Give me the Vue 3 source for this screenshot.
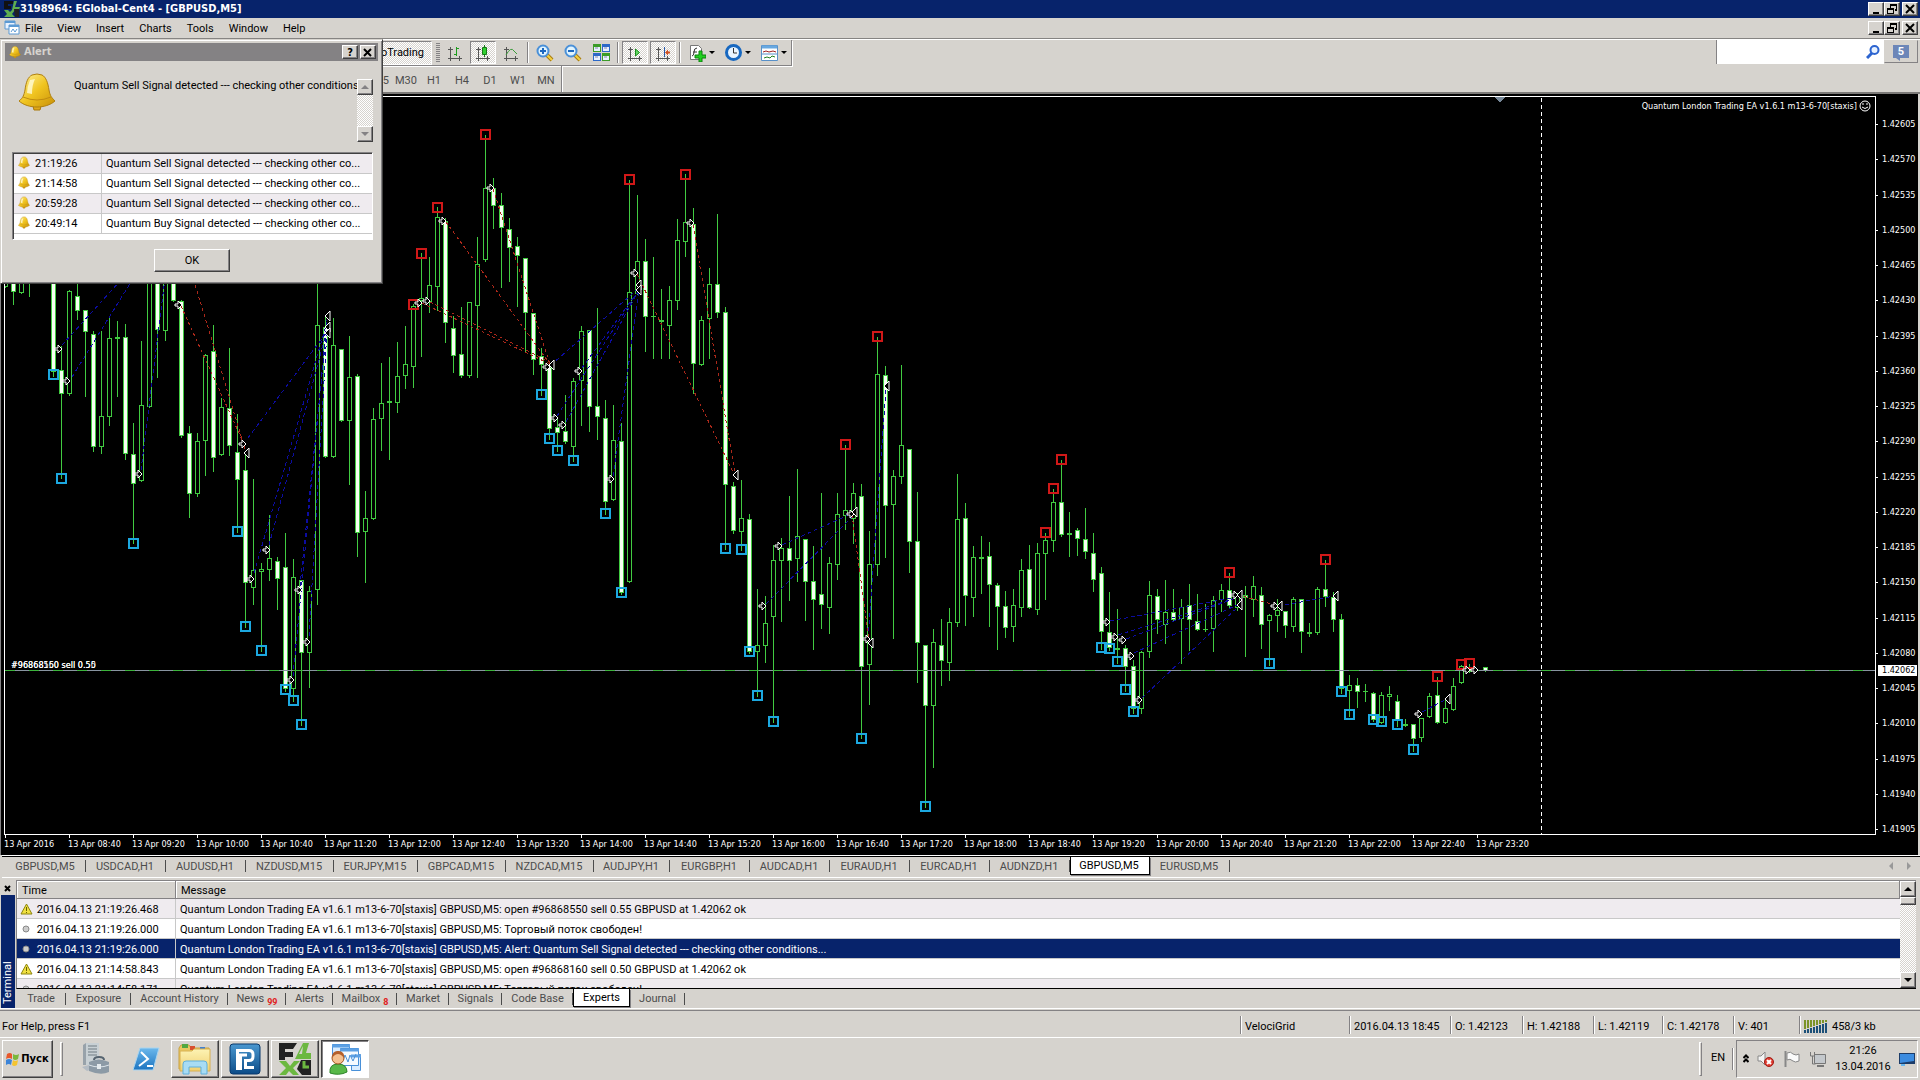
<script setup>
const menus = ['File', 'View', 'Insert', 'Charts', 'Tools', 'Window', 'Help']
const periods = ['M15', 'M30', 'H1', 'H4', 'D1', 'W1', 'MN']

const alerts = [
  { time: '21:19:26', text: 'Quantum Sell Signal detected --- checking other co...' },
  { time: '21:14:58', text: 'Quantum Sell Signal detected --- checking other co...' },
  { time: '20:59:28', text: 'Quantum Sell Signal detected --- checking other co...' },
  { time: '20:49:14', text: 'Quantum Buy Signal detected --- checking other co...' },
]

// Each bar: kind (f = falling, h = rising, d = flat), high, body top, body bottom, low
const bars = [
  ['h', 262, 262, 287, 287], ['f', 250, 250, 292, 304], ['h', 250, 250, 293, 293], ['d', 250, 260, 261, 296], null, null,
  ['f', 240, 240, 372, 376], ['f', 346, 370, 394, 478], ['h', 290, 291, 394, 395], ['f', 283, 296, 311, 319],
  ['f', 310, 310, 332, 396], ['f', 331, 334, 447, 451], ['h', 331, 416, 447, 453], ['h', 318, 338, 417, 425],
  ['d', 321, 337, 339, 396], ['f', 324, 337, 454, 459], ['f', 423, 454, 484, 543], ['h', 341, 405, 481, 481],
  ['h', 250, 250, 407, 407], ['f', 250, 250, 330, 377], ['h', 250, 250, 331, 340], ['f', 250, 250, 301, 301],
  ['f', 300, 301, 436, 437], ['f', 426, 433, 494, 517], ['h', 433, 441, 494, 496], ['h', 354, 355, 441, 475],
  ['f', 325, 351, 458, 471], ['h', 398, 407, 455, 455], ['f', 348, 408, 446, 455], ['f', 414, 452, 480, 532],
  ['f', 455, 470, 583, 627], ['h', 479, 570, 588, 604], ['h', 563, 569, 572, 651], ['h', 515, 558, 570, 580],
  ['f', 557, 561, 579, 609], ['f', 533, 567, 689, 691], ['h', 559, 577, 689, 701], ['f', 580, 580, 653, 725],
  ['h', 586, 591, 653, 687], ['h', 250, 325, 590, 604], ['f', 315, 327, 457, 457], ['h', 318, 345, 457, 457],
  ['f', 349, 349, 421, 421], ['h', 336, 377, 421, 484], ['f', 374, 376, 533, 556], ['h', 491, 518, 532, 582],
  ['h', 408, 419, 519, 519], ['h', 363, 403, 419, 450], ['d', 357, 401, 403, 459], ['h', 342, 376, 403, 412],
  ['h', 326, 364, 376, 388], ['h', 304, 306, 367, 387], ['h', 253, 298, 301, 356], ['h', 257, 285, 302, 312],
  ['h', 207, 217, 287, 310], ['f', 218, 221, 323, 342], ['f', 316, 328, 356, 372], ['f', 307, 354, 376, 377],
  ['h', 302, 302, 376, 377], ['h', 237, 264, 306, 377], ['h', 135, 188, 260, 261], ['f', 178, 188, 206, 228],
  ['f', 193, 205, 228, 287], ['f', 218, 229, 248, 281], ['f', 237, 246, 256, 306], ['f', 258, 258, 313, 351],
  ['f', 313, 313, 360, 374], ['f', 348, 356, 365, 395], ['f', 362, 367, 429, 439], ['f', 419, 427, 433, 451],
  ['f', 395, 431, 442, 443], ['h', 378, 381, 447, 461], ['h', 326, 331, 381, 425], ['f', 330, 330, 407, 431],
  ['f', 308, 406, 417, 439], ['f', 400, 418, 502, 514], ['h', 405, 440, 500, 500], ['f', 423, 441, 593, 594],
  ['h', 180, 292, 582, 582], ['h', 195, 261, 294, 294], ['f', 239, 261, 317, 351], ['d', 257, 316, 317, 358],
  ['d', 289, 320, 322, 358], ['h', 286, 300, 326, 358], ['h', 219, 240, 301, 309], ['h', 174, 222, 242, 256],
  ['f', 208, 224, 364, 393], ['h', 316, 320, 365, 365], ['h', 268, 284, 319, 358], ['f', 214, 284, 313, 317],
  ['f', 307, 312, 485, 549], ['f', 482, 486, 531, 533], ['h', 480, 518, 532, 550], ['f', 514, 519, 652, 653],
  ['h', 589, 645, 652, 696], ['h', 596, 623, 646, 662], ['h', 545, 560, 617, 722], ['h', 538, 548, 561, 621],
  ['f', 496, 548, 561, 600], ['h', 469, 536, 559, 581], ['f', 539, 539, 582, 620], ['f', 546, 581, 600, 649],
  ['f', 493, 594, 605, 628], ['h', 557, 563, 608, 633], ['h', 493, 514, 565, 579], ['h', 445, 510, 516, 529],
  ['h', 483, 493, 519, 543], ['f', 484, 496, 667, 738], ['h', 531, 564, 665, 704], ['h', 337, 374, 565, 575],
  ['f', 366, 375, 506, 557], ['h', 470, 476, 505, 638], ['h', 365, 445, 477, 483], ['f', 449, 449, 542, 572],
  ['f', 492, 541, 643, 682], ['f', 645, 645, 706, 807], ['h', 629, 642, 706, 767], ['f', 619, 645, 661, 685],
  ['h', 608, 622, 663, 680], ['h', 474, 519, 623, 626], ['f', 503, 518, 596, 625], ['h', 546, 557, 598, 616],
  ['d', 536, 557, 559, 593], ['f', 542, 556, 585, 626], ['f', 583, 585, 607, 649], ['f', 591, 606, 628, 637],
  ['h', 589, 605, 627, 641], ['h', 559, 570, 608, 616], ['f', 545, 569, 608, 608], ['h', 543, 553, 610, 614],
  ['h', 533, 540, 554, 599], ['h', 489, 502, 541, 551], ['f', 460, 502, 535, 536], ['d', 512, 533, 535, 556],
  ['f', 528, 530, 539, 555], ['f', 508, 539, 552, 558], ['f', 533, 553, 580, 591], ['f', 567, 573, 632, 649],
  ['f', 592, 632, 648, 650], ['d', 609, 648, 650, 663], ['f', 645, 648, 667, 691], ['f', 660, 666, 709, 713],
  ['h', 651, 652, 709, 713], ['h', 581, 595, 652, 657], ['f', 589, 596, 620, 633], ['h', 580, 612, 625, 643],
  ['f', 589, 612, 620, 620], ['h', 599, 607, 619, 663], ['f', 584, 605, 620, 650], ['f', 594, 621, 630, 630],
  ['d', 604, 629, 630, 631], ['h', 596, 600, 629, 651], ['h', 584, 590, 600, 611], ['f', 573, 590, 606, 607],
  ['h', 593, 595, 608, 610], ['f', 586, 595, 598, 656], ['h', 576, 586, 600, 616], ['f', 587, 595, 625, 648],
  ['h', 614, 615, 621, 665], ['h', 599, 610, 616, 631], ['f', 611, 611, 626, 637], ['h', 597, 599, 627, 631],
  ['f', 599, 599, 632, 652], ['d', 623, 632, 634, 636], ['h', 587, 589, 633, 634], ['f', 560, 589, 597, 606],
  ['f', 592, 597, 620, 631], ['f', 614, 619, 689, 693], ['h', 675, 685, 691, 716], ['f', 678, 685, 692, 707],
  ['d', 684, 691, 692, 701], ['f', 692, 693, 720, 721], ['h', 692, 695, 723, 723], ['h', 686, 694, 697, 710],
  ['f', 695, 701, 721, 726], ['d', 719, 724, 726, 726], ['f', 724, 724, 739, 751], ['h', 718, 718, 738, 741],
  ['h', 693, 696, 717, 717], ['f', 677, 695, 723, 723], ['h', 700, 708, 723, 723], ['h', 678, 686, 710, 710],
  ['h', 665, 666, 683, 683], ['f', 664, 668, 672, 672], null, ['f', 667, 667, 671, 671],
]
const candles = bars
  .map((b, i) => b && { x: i * 8 + 5, kind: b[0], high: b[1], top: b[2], bottom: b[3], low: b[4] })
  .filter(Boolean)

// Bar index and price level of each swing mark
const highs = [[51, 304], [52, 253], [54, 207], [60, 134], [78, 179], [85, 174], [105, 444], [109, 336], [130, 532], [131, 488], [132, 459], [153, 572], [165, 559], [179, 676], [182, 664], [183, 663]]
const lows = [[6, 374], [7, 478], [16, 543], [29, 531], [30, 626], [32, 650], [35, 689], [36, 700], [37, 724], [67, 394], [68, 438], [69, 450], [71, 460], [75, 513], [77, 592], [90, 548], [92, 549], [93, 651], [94, 695], [96, 721], [107, 738], [115, 806], [137, 647], [138, 648], [139, 661], [140, 689], [141, 711], [158, 663], [167, 691], [168, 714], [171, 719], [172, 721], [174, 724], [176, 749]]

const entries = [[58, 349], [66, 381], [138, 474], [178, 305], [242, 444], [250, 579], [266, 550], [298, 590], [290, 680], [306, 642], [418, 303], [426, 301], [442, 221], [490, 188], [546, 367], [554, 418], [562, 425], [578, 371], [610, 479], [634, 273], [690, 223], [778, 546], [762, 606], [850, 514], [866, 639], [1106, 622], [1114, 637], [1122, 640], [1130, 656], [1138, 700], [1234, 595], [1274, 606], [1418, 714], [1466, 670], [1474, 670]]
const exits = [[327, 316], [327, 327], [327, 333], [246, 453], [551, 365], [638, 285], [638, 290], [735, 475], [886, 386], [854, 512], [870, 643], [1239, 595], [1239, 605], [1279, 606], [1335, 596], [1447, 699]]

const buyLines = [[62, 345, 132, 268], [72, 377, 136, 274], [141, 470, 166, 270], [248, 438, 326, 333], [254, 573, 327, 322], [269, 545, 327, 330], [293, 676, 327, 320], [300, 586, 327, 326], [309, 636, 327, 330], [551, 365, 639, 288], [557, 416, 639, 290], [566, 422, 639, 290], [582, 368, 639, 290], [613, 476, 639, 290], [782, 545, 855, 512], [766, 604, 855, 514], [868, 638, 886, 388], [1110, 621, 1236, 597], [1118, 635, 1236, 598], [1126, 639, 1236, 598], [1134, 653, 1237, 605], [1142, 698, 1239, 606], [1278, 606, 1335, 596], [1422, 712, 1447, 699]]
const sellLines = [[181, 306, 244, 444], [190, 268, 246, 452], [446, 222, 550, 364], [493, 189, 550, 364], [422, 303, 550, 364], [430, 302, 550, 362], [637, 274, 734, 474], [693, 225, 735, 474], [852, 515, 869, 640], [1238, 595, 1272, 604]]

const prices = Array.from({ length: 21 }, (_, i) => (1.42605 - i * 0.00035).toFixed(5))
const times = ['2016'].concat(
  Array.from({ length: 23 }, (_, i) => {
    const m = 520 + i * 40
    return String(Math.floor(m / 60)).padStart(2, '0') + ':' + String(m % 60).padStart(2, '0')
  }),
)

const chartTabs = [
  ['GBPUSD,M5', 80], ['USDCAD,H1', 80], ['AUDUSD,H1', 80], ['NZDUSD,M15', 88], ['EURJPY,M15', 84],
  ['GBPCAD,M15', 88], ['NZDCAD,M15', 88], ['AUDJPY,H1', 76], ['EURGBP,H1', 80], ['AUDCAD,H1', 80],
  ['EURAUD,H1', 80], ['EURCAD,H1', 80], ['AUDNZD,H1', 80], ['GBPUSD,M5', 80], ['EURUSD,M5', 80],
]

const ea = 'Quantum London Trading EA v1.6.1 m13-6-70[staxis] GBPUSD,M5: '
const log = [
  { kind: 'warn', time: '2016.04.13 21:19:26.468', text: ea + 'open #96868550 sell 0.55 GBPUSD at 1.42062 ok' },
  { kind: 'info', time: '2016.04.13 21:19:26.000', text: ea + 'Торговый поток свободен!' },
  { kind: 'info', time: '2016.04.13 21:19:26.000', text: ea + 'Alert: Quantum Sell Signal detected --- checking other conditions...' },
  { kind: 'warn', time: '2016.04.13 21:14:58.843', text: ea + 'open #96868160 sell 0.50 GBPUSD at 1.42062 ok' },
  { kind: 'info', time: '2016.04.13 21:14:58.171', text: ea + 'Торговый поток свободен!' },
]

const panes = [
  { name: 'Trade', w: 50 }, { name: 'Exposure', w: 65 }, { name: 'Account History', w: 97 },
  { name: 'News', w: 58, count: 99 }, { name: 'Alerts', w: 47 }, { name: 'Mailbox', w: 64, count: 8 },
  { name: 'Market', w: 52 }, { name: 'Signals', w: 53 }, { name: 'Code Base', w: 71 },
  { name: 'Experts', w: 57 }, { name: 'Journal', w: 55 },
]

const status = [
  ['VelociGrid', 109], ['2016.04.13 18:45', 101], ['O: 1.42123', 72], ['H: 1.42188', 71],
  ['L: 1.42119', 69], ['C: 1.42178', 71], ['V: 401', 66],
]
</script>

<template>
  <div class="desktop">
    <svg width="0" height="0" class="defs" aria-hidden="true">
      <defs>
        <linearGradient id="gold" x1="0" y1="0" x2="1" y2="1">
          <stop offset="0" stop-color="#fff3a0" /><stop offset="0.5" stop-color="#f0c420" /><stop offset="1" stop-color="#c89008" />
        </linearGradient>
        <linearGradient id="folder" x1="0" y1="0" x2="0" y2="1">
          <stop offset="0" stop-color="#fdf3b4" /><stop offset="1" stop-color="#f0d070" />
        </linearGradient>
        <linearGradient id="blue" x1="0" y1="0" x2="0" y2="1">
          <stop offset="0" stop-color="#4a98d0" /><stop offset="1" stop-color="#0c4c88" />
        </linearGradient>
        <linearGradient id="sky" x1="0" y1="0" x2="0" y2="1">
          <stop offset="0" stop-color="#6cb8ec" /><stop offset="1" stop-color="#1c74c0" />
        </linearGradient>
        <symbol id="bell" viewBox="0 0 38 38">
          <path d="M15 33h8l-1 4h-6z" fill="#e0a818" stroke="#a87808" />
          <path d="M14 2q5-2 10 0c4 2 6 8 7 15 1 6 3 8 6 11-9 8-27 8-36 0 4-3 5-6 6-11C8 9 10 4 14 2z" fill="url(#gold)" stroke="#b08010" />
          <path d="M5 24q14 6 28 0" fill="none" stroke="#c08c10" />
          <path d="M12 7q-3 7-3 13l5 1q0-9 3-15z" fill="#fffbd8" opacity=".8" />
        </symbol>
        <symbol id="glass" viewBox="0 0 18 18">
          <path d="M11 11l5 5" stroke="#a87c10" stroke-width="4" /><path d="M11 11l5 5" stroke="#f4d040" stroke-width="2" />
          <circle cx="7" cy="7" r="5.5" fill="#e0f4ff" stroke="#4a90d8" stroke-width="2" />
        </symbol>
        <symbol id="axes" viewBox="0 0 16 16">
          <path d="M3.500 2v11.500H15M1 4.500h5M12.500 11v5M1 13.500h3M3.500 13v3" fill="none" stroke="#555" />
        </symbol>
      </defs>
    </svg>

    <header class="titlebar">
      <svg width="18" height="18" viewBox="0 0 18 18"><path d="M2 1h9v3H6v2h3v3H2z" fill="#111" /><path d="M12 1h3l-2 6h5l-1 3h-7z" fill="#5fae50" /><path d="M2 10h4l2 2 2-2h3l-3 4 3 3H2l3-3z" fill="#5fae50" /><path d="M12 9h5v8h-4z" fill="#222" /></svg>
      <h1>3198964: EGlobal-Cent4 - [GBPUSD,M5]</h1>
      <div class="winbtns">
        <button aria-label="Minimize"><svg width="12" height="10"><path d="M3 8h6v2H3z" /></svg></button>
        <button aria-label="Restore"><svg width="12" height="10"><path d="M4 0h7v7H9V5h1V2H5v2H4zM1 4h7v6H1zm1 2v3h5V6z" fill-rule="evenodd" /></svg></button>
        <button class="close" aria-label="Close"><svg width="12" height="10"><path d="M2 1l8 8M10 1l-8 8" stroke="#000" stroke-width="2" /></svg></button>
      </div>
    </header>

    <nav class="menubar">
      <svg width="16" height="16" viewBox="0 0 16 16"><path d="M1 1h10v8H1z" fill="#e8f2ff" stroke="#5c9ad4" /><path d="M5 5h10v9H5z" fill="#fff" stroke="#5c9ad4" /><path d="M1 2h10M5 6h10" stroke="#5c9ad4" stroke-width="2" /><path d="M7 12l2-3 2 3 2-3" fill="none" stroke="#5c9ad4" /></svg>
      <button v-for="m in menus" :key="m">{{ m }}</button>
      <div class="winbtns">
        <button aria-label="Minimize chart"><svg width="12" height="10"><path d="M3 8h6v2H3z" /></svg></button>
        <button aria-label="Restore chart"><svg width="12" height="10"><path d="M4 0h7v7H9V5h1V2H5v2H4zM1 4h7v6H1zm1 2v3h5V6z" fill-rule="evenodd" /></svg></button>
        <button class="close" aria-label="Close chart"><svg width="12" height="10"><path d="M2 1l8 8M10 1l-8 8" stroke="#000" stroke-width="2" /></svg></button>
      </div>
    </nav>

    <div class="toolbars">
      <div class="bars">
        <div class="bar first">
          <button class="auto on">AutoTrading</button>
          <i class="grip"></i>
          <button class="tool" aria-label="Bar chart"><svg width="16" height="16"><use href="#axes" /><path d="M9.500 2v9M9 3.500h3M7 9.500h3" stroke="#1c9c1c" fill="none" /></svg></button>
          <button class="tool on" aria-label="Candlesticks"><svg width="16" height="16"><use href="#axes" /><path d="M9.500 0v12" stroke="#167a16" /><path d="M7.500 2.500h4v7h-4z" fill="#30d030" stroke="#167a16" /></svg></button>
          <button class="tool" aria-label="Line chart"><svg width="16" height="16"><use href="#axes" /><path d="M3 10q5-9 8-4l3 3" stroke="#3c9c3c" fill="none" /></svg></button>
          <i class="sep"></i>
          <button class="tool" aria-label="Zoom in"><svg width="18" height="18"><use href="#glass" /><path d="M4 7h6M7 4v6" stroke="#1c68c0" stroke-width="2" /></svg></button>
          <button class="tool" aria-label="Zoom out"><svg width="18" height="18"><use href="#glass" /><path d="M4 7h6" stroke="#1c68c0" stroke-width="2" /></svg></button>
          <button class="tool" aria-label="Tile windows"><svg width="17" height="17"><path d="M0 0h8v8H0zM9 9h8v8H9z" fill="#3c9c28" /><path d="M9 0h8v8H9zM0 9h8v8H0z" fill="#2c68c8" /><path d="M1 3h6v4H1zM10 3h6v4h-6zM1 12h6v4H1zM10 12h6v4h-6z" fill="#e8f0ff" /><path d="M2 4h3M11 4h3M2 13h3M11 13h3" stroke="#88a" /></svg></button>
          <i class="sep"></i>
          <button class="tool on" aria-label="Auto scroll"><svg width="16" height="16"><use href="#axes" /><path d="M8.500 4v7l4-3.500z" fill="#60d860" stroke="#1c8c1c" /></svg></button>
          <button class="tool on" aria-label="Chart shift"><svg width="16" height="16"><use href="#axes" /><path d="M9.500 2v10" stroke="#2858a8" /><path d="M10 7.500l3-3v2h2v2h-2v2z" fill="#d05020" /></svg></button>
          <i class="sep"></i>
          <button class="tool drop" aria-label="Indicators"><svg width="17" height="18"><path d="M1.500 1.500h8l3 3v11h-11z" fill="#fff" stroke="#777" /><path d="M3 12q2 0 2-4t3-4M4 8h4" fill="none" stroke="#333" /><path d="M6 11h4V7h3v4h4v3h-4v4h-3v-4H6z" fill="#20d020" stroke="#0c800c" /></svg></button>
          <button class="tool drop" aria-label="Periods"><svg width="17" height="17"><circle cx="8.500" cy="8.500" r="7" fill="#e8f4ff" stroke="#1868c0" stroke-width="3" /><path d="M8.500 4v5H12" fill="none" stroke="#333" /></svg></button>
          <button class="tool drop" aria-label="Templates"><svg width="17" height="16"><path d="M.500.500h16v15H.500z" fill="#fff" stroke="#5890c8" /><path d="M1 2h15" stroke="#68a8e0" stroke-width="3" /><path d="M2 7l3-1 3 1 4-1 3 1" fill="none" stroke="#a02020" /><path d="M1 9h15" stroke="#5890c8" /><path d="M3 13l3-1 3 1 2-2 3 1" fill="none" stroke="#208020" /></svg></button>
        </div>
        <div class="bar second">
          <button v-for="p in periods" :key="p">{{ p }}</button>
        </div>
      </div>
      <div class="search">
        <input type="text" aria-label="Search" />
        <svg width="14" height="14"><circle cx="8.500" cy="5" r="4" fill="#e8f2ff" stroke="#2c64d0" stroke-width="2" /><path d="M6 8l-5 5" stroke="#2c64d0" stroke-width="3" /></svg>
      </div>
      <button class="chat" aria-label="Messages"><span>5</span></button>
    </div>

    <main class="chart">
      <svg class="plot" width="100%" height="100%">
        <g transform="translate(-5 -97)" shape-rendering="crispEdges">
          <path d="M1494 97h12l-6 5z" fill="#778899" />
          <path d="M1541.500 98v740" stroke="#fff" stroke-dasharray="4 3" />
          <g v-for="c in candles" :key="c.x">
            <rect :x="c.x" :y="c.high" width="1" :height="c.low - c.high + 1" fill="#41cb41" />
            <rect :x="c.x - 2" :y="c.top" width="5" :height="c.bottom - c.top" fill="#41cb41" />
            <rect v-if="c.kind !== 'd'" :x="c.x - 1" :y="c.top + 1" width="3" :height="c.bottom - c.top - 2" :fill="c.kind === 'f' ? '#f6fff2' : '#000'" />
          </g>
          <path d="M5 670.500h1900" stroke="#8894a0" />
          <path d="M5 670.500h1900" stroke="#3cb43c" stroke-dasharray="10 14" />
          <path v-for="(l, i) in buyLines" :key="'b' + i" :d="`M${l[0]} ${l[1]}L${l[2]} ${l[3]}`" class="buy" />
          <path v-for="(l, i) in sellLines" :key="'s' + i" :d="`M${l[0]} ${l[1]}L${l[2]} ${l[3]}`" class="sell" />
          <rect v-for="h in highs" :key="'h' + h[0]" :x="h[0] * 8 + 1" :y="h[1] - 4" width="9" height="9" class="high" />
          <rect v-for="l in lows" :key="'l' + l[0]" :x="l[0] * 8 + 1" :y="l[1] - 4" width="9" height="9" class="low" />
          <path v-for="(e, i) in entries" :key="'e' + i" :d="`M${e[0] - 3} ${e[1] - 1}h3v-3l4 4l-4 4v-3h-3z`" class="mark" />
          <path v-for="(e, i) in exits" :key="'x' + i" :d="`M${e[0] - 2} ${e[1]}l5 -5v10z`" class="mark" />
        </g>
        <g class="order"><text x="6" y="571">#96868550 sell 0.55</text><text x="6" y="571">#96868160 sell 0.50</text></g>
      </svg>
      <div class="expert">
        <span>Quantum London Trading EA v1.6.1 m13-6-70[staxis]</span>
        <svg width="12" height="12"><circle cx="6" cy="6" r="5" fill="none" stroke="#fff" /><path d="M4 3v2M8 3v2M3 7q3 3 6 0" fill="none" stroke="#fff" /></svg>
      </div>
      <div class="prices">
        <span v-for="p in prices" :key="p">{{ p }}</span>
        <b>1.42062</b>
      </div>
      <div class="times"><span v-for="t in times" :key="t">13 Apr {{ t }}</span></div>
    </main>

    <nav class="charttabs">
      <button v-for="(t, i) in chartTabs" :key="i" :class="{ active: i === 13 }" :style="{ width: t[1] + 'px' }">{{ t[0] }}</button>
      <svg width="24" height="8"><path d="M5 0v8L1 4zM19 0v8l4-4z" fill="#999" /></svg>
    </nav>

    <section class="terminal">
      <aside>
        <button aria-label="Close terminal"><svg width="7" height="7"><path d="M1 1l5 5M6 1L1 6" stroke="#000" stroke-width="2" /></svg></button>
        <h2>Terminal</h2>
      </aside>
      <div class="pane">
        <div class="logbox">
          <div class="scroll">
            <table>
              <thead><tr><th class="when">Time</th><th>Message</th></tr></thead>
              <tbody>
                <tr v-for="(r, i) in log" :key="i" :class="{ selected: i === 2 }">
                  <td>
                    <svg v-if="r.kind === 'warn'" width="13" height="12"><path d="M6.500 1L12 11H1z" fill="#f0e040" stroke="#8c8410" /><path d="M6.500 4v4M6.500 9v1" stroke="#6c6400" /></svg>
                    <svg v-else width="13" height="12"><circle cx="6" cy="6" r="3" fill="#ccc" stroke="#888" /></svg>
                    {{ r.time }}
                  </td>
                  <td>{{ r.text }}</td>
                </tr>
              </tbody>
            </table>
          </div>
          <div class="vbar">
            <button aria-label="Scroll up"><svg width="8" height="4"><path d="M4 0l4 4H0z" /></svg></button>
            <i></i>
            <button class="down" aria-label="Scroll down"><svg width="8" height="4"><path d="M0 0h8L4 4z" /></svg></button>
          </div>
        </div>
        <nav class="panes">
          <button v-for="p in panes" :key="p.name" :class="{ active: p.name === 'Experts' }" :style="{ width: p.w + 'px' }">{{ p.name }}<sub v-if="p.count">{{ p.count }}</sub></button>
        </nav>
      </div>
    </section>

    <footer class="status">
      <span class="help">For Help, press F1</span>
      <span v-for="s in status" :key="s[0]" class="cell" :style="{ width: s[1] + 'px' }">{{ s[0] }}</span>
      <span class="cell net">
        <svg width="24" height="13"><path v-for="n in 8" :key="n" :d="`M${n * 3 - 2} 0v${10 - n}`" stroke="#7c9428" stroke-width="2" /><path v-for="n in 8" :key="'d' + n" :d="`M${n * 3 - 2} 13v-${n + 2}`" stroke="#1c5078" stroke-width="2" /></svg>
        458/3 kb
      </span>
    </footer>

    <footer class="taskbar">
      <button class="start">
        <svg width="14" height="16" viewBox="0 0 14 16"><path d="M1 3q3-2 5 0v5q-3-2-6 0z" fill="#e8582c" /><path d="M7 3q3 2 6 0l-1 5q-3 2-5 0z" fill="#7cb83c" /><path d="M0 9q3-2 6 0l-1 5q-2-2-5 0z" fill="#3c84d8" /><path d="M7 9q2 2 5 0l-1 5q-3 2-5 0z" fill="#f4c430" /></svg>Пуск
      </button>
      <i class="divider"></i>
      <button class="app" aria-label="Server Manager"><svg width="30" height="32"><path d="M2 2l3-2h13v22H2z" fill="#98a2aa" /><path d="M5 0h13v22H5z" fill="#c8d0d4" /><path d="M7 3h9M7 6h9M7 9h9M7 12h9" stroke="#707c84" stroke-width="1" /><path d="M1 24l10-3 4 4-9 3z" fill="#b4bcc4" /><path d="M8 19q10-5 20 0v10q-8 4-20-1z" fill="#8c9aa6" /><path d="M13 17q0-3 5-3t5 3" fill="none" stroke="#566470" stroke-width="2" /><path d="M8 22q10 4 20 0" stroke="#dce4ea" fill="none" /><path d="M16 21h4v5h-4z" fill="#e4eaee" /></svg></button>
      <button class="app" aria-label="PowerShell"><svg width="28" height="24"><path d="M8 1h19l-6 22H1z" fill="url(#sky)" stroke="#a8d4f0" /><path d="M9 5l7 7-9 7M15 19h6" fill="none" stroke="#fff" stroke-width="2" /></svg></button>
      <button class="app raised" aria-label="Explorer"><svg width="34" height="32"><path d="M1 5l2-3h8l2 3h18v21H1z" fill="#e8c860" stroke="#c8a040" /><path d="M4 1h6v4H4z" fill="#50a840" /><path d="M12 3h5v4h-5z" fill="#d85030" /><path d="M22 4h5v4h-5z" fill="#4080d0" /><path d="M2 8h12l2-2h16v22H2z" fill="url(#folder)" stroke="#d8b050" /><path d="M5 31V21q0-3 3-3h18q3 0 3 3v10h-6v-7H11v7z" fill="#a8dcf4" stroke="#60b0dc" /></svg></button>
      <button class="app raised" aria-label="Remote client"><svg width="32" height="32"><rect x="1" y="1" width="30" height="30" rx="3" fill="url(#blue)" stroke="#08386c" /><path d="M8.500 27V7.500H20q4 0 4 4v2q0 4-4 4h-3.500v7H25M8.500 25.500h3V12H18" fill="none" stroke="#fff" stroke-width="3" /></svg></button>
      <button class="app raised" aria-label="EX4 terminal"><svg width="32" height="32"><path d="M0 0h18l-4 6H6v3h8v5H6v3H0zM22 17h10v15h-9l-5-6z" fill="#222" /><path d="M24 0h6l-3 10h5v6H16z" fill="#6cb840" /><path d="M24 3l-4 8h3z" fill="#d6d3ce" /><path d="M0 18h7l4 5 4-5h6l-7 7 6 7h-6l-4-4-3 4H0l7-7z" fill="#6cb840" /><path d="M25 18v6h5" fill="none" stroke="#6cb840" stroke-width="3" /></svg></button>
      <button class="app raised pressed" aria-label="MetaTrader"><svg width="32" height="32"><path d="M3.500 1.500h17v13h-17zM22.500 11.500h9v16h-9z" fill="#d8ecff" stroke="#4890d8" /><path d="M11.500 5.500h18v17h-18z" fill="#f4faff" stroke="#4890d8" /><path d="M3 3h18M11 7h19M22 13h10" stroke="#5ca0e4" stroke-width="3" /><path d="M14 17l2-5 3 7 2-7 3 6 3-7" fill="none" stroke="#4890d8" /><path d="M1 30q-1-9 8-9t9 8q-8 4-17 1z" fill="#58b848" stroke="#2c8428" /><circle cx="9" cy="15" r="6" fill="#f4c090" stroke="#a0541c" /><path d="M3 15q0-8 7-7 6 1 5 7-3-4-6-4t-6 4z" fill="#b4602c" /></svg></button>
      <i class="divider right"></i>
      <span class="lang">EN</span>
      <i class="sep tall"></i>
      <div class="tray">
        <svg width="6" height="10"><path d="M.500 4L3 1.500 5.500 4M.500 8L3 5.500 5.500 8" fill="none" stroke="#000" stroke-width="2" /></svg>
        <svg width="18" height="16"><path d="M1 5h3l4-4v13l-4-4H1z" fill="#f4f4f4" stroke="#888" /><circle cx="12" cy="11" r="4.500" fill="#e03c30" stroke="#a01c14" /><path d="M10 9l4 4M14 9l-4 4" stroke="#fff" stroke-width="2" /></svg>
        <svg width="18" height="16"><path d="M2.500 0v16" stroke="#888" stroke-width="2" /><path d="M4 2q4-2 6 1 3 2 6 0v7q-4 2-6 0-3-3-6-1z" fill="#fafafa" stroke="#888" /></svg>
        <svg width="18" height="16"><path d="M5.500 3.500h11v9h-11z" fill="#c4c8cc" stroke="#777" /><path d="M8 15h7" stroke="#777" stroke-width="2" /><path d="M1.500 1v4h4V1M3.500 5v8h3" fill="none" stroke="#777" /></svg>
        <time>21:26<br />13.04.2016</time>
        <svg width="16" height="14"><path d="M0 1h16v11H0z" fill="#1c3c68" /><path d="M1 2h14v7L1 11z" fill="#3c8ce0" /><path d="M2 12h4v2H2z" fill="#68b8f0" /></svg>
      </div>
    </footer>

    <section class="alert" role="dialog" aria-label="Alert">
      <header>
        <svg width="12" height="12"><use href="#bell" /></svg>
        <h2>Alert</h2>
        <button aria-label="Help">?</button>
        <button aria-label="Close alert"><svg width="10" height="9"><path d="M1 1l7 7M8 1L1 8" stroke="#000" stroke-width="2" /></svg></button>
      </header>
      <div class="message">
        <svg width="38" height="38"><use href="#bell" /></svg>
        <p>Quantum Sell Signal detected --- checking other conditions</p>
        <div class="vbar off">
          <button aria-label="Message up"><svg width="8" height="4"><path d="M4 0l4 4H0z" /></svg></button>
          <button class="down" aria-label="Message down"><svg width="8" height="4"><path d="M0 0h8L4 4z" /></svg></button>
        </div>
      </div>
      <div class="list">
        <table>
          <tbody>
            <tr v-for="a in alerts" :key="a.time">
              <td><svg width="12" height="13"><use href="#bell" /></svg>{{ a.time }}</td>
              <td>{{ a.text }}</td>
            </tr>
          </tbody>
        </table>
      </div>
      <button class="ok">OK</button>
    </section>
  </div>
</template>

<style>
body { background: #d6d3ce; }
</style>

<style scoped>
.desktop {
  position: relative;
  display: flex;
  flex-direction: column;
  min-height: 100vh;
  background: #d6d3ce;
  color: #000;
  font: 11px/14px Roboto, "DejaVu Sans Condensed", sans-serif;
  overflow: hidden;
}
.desktop * { box-sizing: border-box; }
.defs { position: absolute; }
button {
  font: inherit;
  color: inherit;
  padding: 0;
  margin: 0;
  border: 0;
  border-radius: 0;
  background: none;
}
svg { display: block; flex: none; }
h1, h2, p { margin: 0; font-size: 11px; }

.titlebar { display: flex; align-items: center; height: 18px; padding: 0 2px; background: #07236b; color: #fff; }
.titlebar h1, .alert header { font-family: "DejaVu Sans Condensed", "DejaVu Sans", sans-serif; }
.menubar { display: flex; align-items: center; height: 21px; padding: 0 2px 1px 4px; border-bottom: 1px solid #868482; }
.menubar > svg { margin-right: 3px; }
.menubar > button { padding: 2px 8px 0 7px; height: 18px; }
.menubar > button:first-of-type { padding-left: 2px; }
.winbtns { display: flex; margin-left: auto; }
.winbtns button { display: grid; place-items: center; width: 16px; height: 14px; }
.winbtns .close { margin-left: 2px; }
.winbtns button, .alert header button, .vbar button, .vbar i, .raised, .start, .ok {
  background: #d6d3ce;
  color: #000;
  border: 1px solid;
  border-color: #fff #404040 #404040 #fff;
  box-shadow: inset -1px -1px #848284;
}

.toolbars { display: flex; align-items: flex-start; height: 55px; border-top: 1px solid #fff; border-bottom: 2px solid #7c7a78; padding-right: 2px; }
.bars { display: flex; flex-direction: column; align-items: flex-start; }
.bar { display: flex; align-items: center; height: 26px; border-right: 1px solid #848284; border-bottom: 1px solid #848284; box-shadow: 1px 1px #fff; }
.first { padding: 0 0 0 340px; }
.second { width: 562px; padding: 4px 0 0 364px; color: #4c4c4c; border-bottom: 0; box-shadow: 1px 0 #fff; }
.second button { width: 28px; height: 22px; }
.auto { width: 92px; height: 24px; padding-right: 7px; text-align: right; }
.on {
  border: 1px solid;
  border-color: #848284 #fff #fff #848284;
  background: conic-gradient(#fff 25%, #d6d3ce 0 50%, #fff 0 75%, #d6d3ce 0) 0 0 / 2px 2px;
}
.grip { width: 4px; height: 20px; margin: 0 1px 0 4px; background: repeating-linear-gradient(#848284 0 1px, #d6d3ce 1px 2px); }
.tool { display: grid; place-items: center; width: 26px; height: 23px; margin: 0 1px; }
.sep { width: 2px; height: 21px; margin: 0 2px; border-left: 1px solid #848284; border-right: 1px solid #fff; }
.drop { position: relative; width: 34px; padding-right: 8px; }
.drop::after { content: ""; position: absolute; right: 3px; top: 10px; border: 3px solid transparent; border-top-color: #000; border-bottom: 0; }
.search { display: flex; align-items: center; width: 168px; height: 24px; margin-left: auto; background: #fff; border-left: 1px solid #848284; padding-right: 4px; }
.search input { flex: 1; min-width: 0; height: 22px; border: 0; background: none; outline: 0; }
.chat { display: grid; place-items: center; width: 34px; height: 23px; border: 1px solid; border-color: #d6d3ce #848284 #848284 #d6d3ce; }
.chat span { position: relative; width: 16px; height: 13px; background: #6c86b8; color: #fff; font-weight: bold; line-height: 13px; }
.chat span::after { content: ""; position: absolute; left: 3px; top: 13px; border: 4px solid transparent; border-top: 3px solid #6c86b8; border-right: 0; border-bottom: 0; }

.chart {
  position: relative;
  flex: 1;
  display: grid;
  grid-template: 1fr 20px / 1fr 42px;
  min-height: 500px;
  margin-right: 2px;
  padding: 2px 0 0 4px;
  background: #000;
  color: #fff;
  font-family: "DejaVu Sans Condensed", "DejaVu Sans", sans-serif;
  font-size: 9px;
  box-shadow: inset 1px 0 #848284;
}
.plot { min-width: 0; border: 1px solid #fff; overflow: hidden; }
.buy { stroke: #0c0ca0; stroke-dasharray: 4 3; }
.sell { stroke: #ac281a; stroke-dasharray: 3 3; }
.high { fill: none; stroke: #d01818; stroke-width: 2; }
.low { fill: none; stroke: #1ca8e0; stroke-width: 2; }
.mark { fill: #000; stroke: #fff; shape-rendering: auto; }
.order { fill: #fff; }
.expert { position: absolute; right: 47px; top: 6px; display: flex; align-items: center; gap: 2px; line-height: 12px; }
.prices { position: relative; display: flex; flex-direction: column; justify-content: space-between; padding: 22px 0 0; line-height: 12px; }
.prices span { padding-left: 6px; }
.prices span::before { content: ""; float: left; width: 2px; height: 1px; margin: 6px 0 0 -6px; background: #fff; }
.prices b { position: absolute; left: 2px; right: 1px; top: 569px; padding-left: 4px; background: #fff; color: #000; font-weight: normal; line-height: 11px; }
.times { display: flex; grid-column: 1 / 3; min-width: 0; overflow: hidden; line-height: 12px; }
.times span { flex: none; width: 64px; padding-top: 3px; white-space: nowrap; position: relative; }
.times span::before { content: ""; position: absolute; left: 1px; top: 0; width: 1px; height: 3px; background: #fff; }

.charttabs { display: flex; align-items: flex-start; height: 23px; padding: 0 8px 0 4px; margin: 0 0 1px 2px; border-top: 1px solid #fff; box-shadow: inset 0 1px #000; border-bottom: 1px solid #fff; color: #4c4c4c; }
.charttabs svg { margin: 6px 0 0 auto; }
.charttabs button, .panes button { flex: none; position: relative; height: 19px; white-space: nowrap; }
.charttabs button { height: 21px; padding-right: 2px; }
.charttabs button::after, .panes button::after { content: ""; position: absolute; right: 0; top: 4px; width: 1px; height: 12px; background: #4c4c4c; }
.charttabs .active, .panes .active { background: #fff; color: #000; border: 1px solid #000; border-top: 0; box-shadow: 1px 1px #848284; }
.charttabs .active::after, .panes .active::after { display: none; }
.charttabs .active { margin-top: 1px; height: 18px; padding-top: 1px; }

.terminal { display: flex; height: 130px; padding-right: 4px; border-bottom: 1px solid #fff; }
aside { display: flex; flex-direction: column; width: 15px; margin-right: 1px; }
aside button { display: grid; place-items: center; height: 16px; padding-top: 2px; }
aside h2 { flex: 1; margin-left: 1px; padding: 4px 0 0; background: #07236b; color: #fff; font-weight: normal; writing-mode: vertical-rl; transform: rotate(180deg); line-height: 13px; }
.pane { flex: 1; min-width: 0; display: flex; flex-direction: column; padding-top: 1px; }
.logbox { display: flex; height: 109px; border-top: 1px solid #848284; border-left: 1px solid #848284; border-bottom: 1px solid #000; }
.scroll { flex: 1; min-width: 0; overflow: hidden; background: #fff; }
table { width: 100%; border-collapse: separate; border-spacing: 0; table-layout: fixed; }
th { height: 18px; padding: 3px 5px 0; background: #d6d3ce; text-align: left; font-weight: normal; border-bottom: 1px solid #848284; border-right: 1px solid #848284; box-shadow: inset 1px 1px #fff; }
.when { width: 159px; }
td { height: 20px; padding: 0; white-space: nowrap; overflow: hidden; border-bottom: 1px solid #c8c8c8; }
td:first-child { border-right: 1px solid #c8c8c8; }
td svg { display: inline-block; vertical-align: -2px; }
.terminal td { padding: 2px 4px 0; }
.terminal td:first-child { padding: 2px 3px 0; }
.terminal td svg { margin-right: 1px; }
tbody tr:nth-child(odd) { background: #efebef; }
.terminal .selected { background: #07236b; color: #fff; }
.vbar { display: flex; flex: none; flex-direction: column; width: 16px; background: conic-gradient(#fff 25%, #d6d3ce 0 50%, #fff 0 75%, #d6d3ce 0) 0 0 / 2px 2px; }
.vbar button { display: grid; place-items: center; height: 16px; }
.vbar i { height: 8px; }
.vbar .down { margin-top: auto; }
.panes { display: flex; color: #4c4c4c; }
.panes .active { height: 18px; }
sub { margin-left: 3px; color: #e02020; font-size: 9px; font-weight: bold; line-height: 0; vertical-align: -3px; }

.status { display: flex; align-items: center; height: 28px; margin-top: 1px; padding: 2px 2px 0 0; border-top: 1px solid #848284; border-bottom: 1px solid #fff; }
.help { flex: 1; padding: 3px 0 0 2px; }
.cell { display: flex; align-items: center; gap: 4px; height: 18px; padding: 3px 0 0 4px; border-left: 1px solid #848284; box-shadow: inset 1px 0 #fff; white-space: nowrap; }
.net { width: 119px; }

.taskbar { display: flex; align-items: center; height: 42px; padding: 0 2px; }
.start { display: flex; align-items: center; justify-content: center; gap: 1px; width: 51px; height: 38px; font-family: "DejaVu Sans", sans-serif; font-weight: bold; font-size: 10px; }
.divider { width: 3px; height: 34px; margin: 0 10px 0 7px; border: 1px solid; border-color: #fff #848284 #848284 #fff; }
.app { display: grid; place-items: center; width: 48px; height: 38px; margin-right: 2px; }
.app:not(.raised) { width: 40px; margin-right: 10px; }
.app:not(.raised) + .raised { margin-left: -5px; }
.app:not(.raised):first-of-type { margin-left: 4px; }
.divider + .app { margin-left: 3px; }
.pressed { background: #fff; border-color: #404040 #fff #fff #404040; box-shadow: inset 1px 1px #848284; }
.divider.right { margin: 0 9px 0 auto; }
.lang { width: 19px; padding-bottom: 3px; }
.tall { height: 22px; }
.tray { display: flex; align-items: center; gap: 8px; width: 182px; height: 38px; padding: 0 2px 0 6px; border: 1px solid; border-color: #848284 #fff #fff #848284; }
.tray time { flex: 1; text-align: center; line-height: 16px; }

.alert {
  position: absolute;
  left: 0;
  top: 39px;
  width: 383px;
  height: 245px;
  padding: 3px 4px;
  background: #d6d3ce;
  border: 1px solid;
  border-color: #d6d3ce #404040 #404040 #d6d3ce;
  box-shadow: inset 1px 1px #fff, inset -1px -1px #848284;
}
.alert header { display: flex; align-items: center; height: 18px; padding: 0 0 0 4px; background: #848284; color: #d6d3ce; }
.alert header h2 { margin: 0 auto 0 3px; }
.alert header button { display: grid; place-items: center; width: 16px; height: 14px; margin-right: 2px; font-weight: bold; line-height: 11px; }
.message { display: flex; height: 81px; padding: 12px 5px 0 13px; }
.message p { flex: 1; min-width: 0; padding: 6px 0 0 18px; white-space: nowrap; }
.message .vbar { margin-top: 6px; height: 63px; }
.off svg { fill: #848284; }
.list { height: 88px; margin: 10px 5px 0 7px; border: 1px solid; border-color: #848284 #fff #fff #848284; box-shadow: inset 1px 1px #404040; padding: 1px 0 0 1px; background: #fff; overflow: hidden; }
.list td:first-child { width: 88px; padding-left: 4px; }
.list td:first-child svg { margin-right: 5px; }
.list td { padding-left: 4px; text-overflow: clip; }
.ok { display: block; width: 76px; height: 23px; margin: 9px 0 0 149px; }
</style>
